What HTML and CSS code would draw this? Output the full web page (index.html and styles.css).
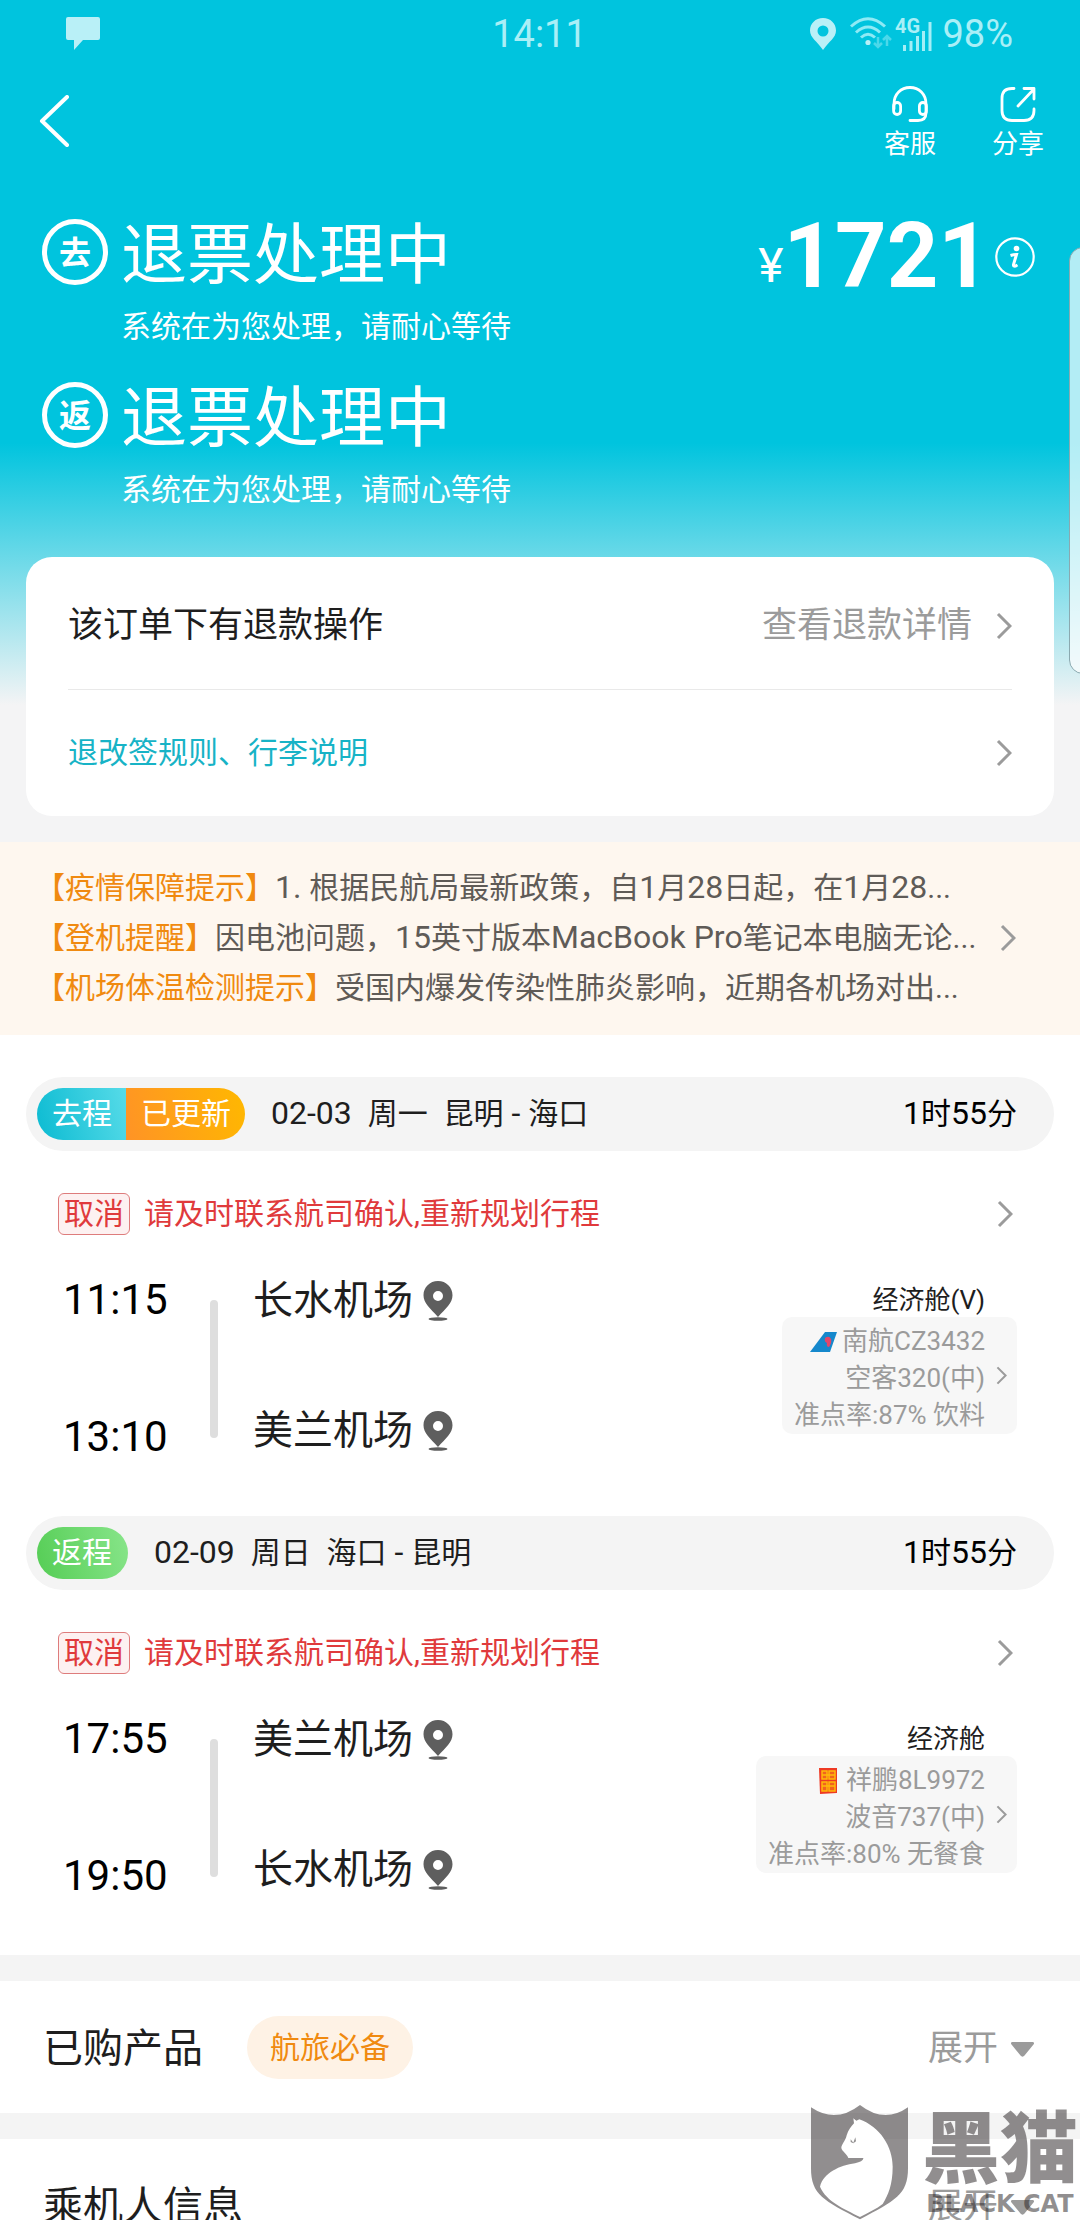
FILE: index.html
```html
<!DOCTYPE html>
<html lang="zh-CN">
<head>
<meta charset="utf-8">
<meta name="viewport" content="width=device-width">
<title>订单详情</title>
<link rel="stylesheet" href="styles.css">
</head>
<body>
<svg class="defs" aria-hidden="true">
  <symbol id="chevron" viewBox="0 0 16 28"><path d="M2 2l12 12L2 26" fill="none" stroke="#9b9b9b" stroke-width="3"/></symbol>
  <symbol id="pin" viewBox="0 0 30 40">
    <path fill="#5e5e5e" fill-rule="evenodd" d="M15 0C6.700 0 .5 6.400.5 14.200.5 22 7 27 15 36 23 27 29.500 22 29.500 14.200 29.500 6.400 23.300 0 15 0zm0 10a5 5 0 1 1 0 10 5 5 0 0 1 0-10z"/>
    <ellipse cx="15" cy="38" rx="9.500" ry="1.800" fill="#5e5e5e"/>
  </symbol>
  <symbol id="caret" viewBox="0 0 23 15"><path fill="#9b9b9b" d="M1.500 0h20c1.500 0 2 1.500 1 2.500l-9 11c-1 1.500-3 1.500-4 0l-9-11C-.5 1.500 0 0 1.500 0z"/></symbol>
</svg>

<div class="hero">
  <div class="statusbar">
    <svg width="34" height="34" viewBox="0 0 34 34"><path fill="#b9f0f7" d="M2 0h30q2 0 2 2v19q0 2-2 2H17L8 33V23H2q-2 0-2-2V2q0-2 2-2z"/></svg>
    <span class="clock">14:11</span>
    <div class="signals">
      <svg width="26" height="32" viewBox="0 0 26 32"><path fill="#b9f0f7" fill-rule="evenodd" d="M13 0C5.500 0 0 5.500 0 12.500 0 20 7 23 13 32 19 23 26 20 26 12.500 26 5.500 20.500 0 13 0zm0 7.500a5.500 5.500 0 1 1 0 11 5.500 5.500 0 0 1 0-11z"/></svg>
      <svg class="wifi" width="42" height="34" viewBox="0 0 42 34">
        <g fill="none" stroke="#8eeaf5" stroke-width="3"><path d="M1 9.500Q18 -6 35 9.500"/><path d="M6 15.500Q18 4.500 30 15.500"/><path d="M11 20.500Q18 14 25 20.500"/></g>
        <circle cx="18" cy="25.500" r="2.600" fill="#b9f0f7"/>
        <path d="M28 20v10m-4-4l4 4 4-4M37 29V19m-4 4l4-4 4 4" fill="none" stroke="#4cd8ea" stroke-width="2.500"/>
      </svg>
      <svg width="38" height="34" viewBox="0 0 38 34">
        <text x="0" y="16" class="net">4G</text>
        <g fill="#a5eef6"><path d="M8 28h3v6H8zM14.500 24h3v10h-3zM21 19h3v15h-3zM27 14h3v20h-3zM33.500 5h3v29h-3z"/></g>
      </svg>
      <span class="battery">98%</span>
    </div>
  </div>

  <header class="appbar">
    <button class="back" aria-label="返回"><svg width="30" height="52" viewBox="0 0 30 52"><path d="M28 2L3 26l25 24" fill="none" stroke="#fff" stroke-width="4" stroke-linecap="round" stroke-linejoin="round"/></svg></button>
    <nav class="tools">
      <button class="tool">
        <svg width="36" height="36" viewBox="0 0 36 36" fill="none" stroke="#fff" stroke-width="2.800" stroke-linecap="round"><path d="M2 23V18C2 8 9 1.500 18 1.500S34 8 34 18v9q0 7.500-8 7.500h-8"/><rect x="1.600" y="16.500" width="7" height="12" rx="3.500"/><rect x="27.400" y="16.500" width="7" height="12" rx="3.500"/></svg>
        客服
      </button>
      <button class="tool">
        <svg width="36" height="36" viewBox="0 0 36 36" fill="none" stroke="#fff" stroke-width="2.800" stroke-linecap="round" stroke-linejoin="round"><path d="M14 2.500h-2q-10 0-10 10v12q0 10 10 10h12q10 0 10-10V23"/><path d="M18 20L34 3M24 2.500h10V13"/></svg>
        分享
      </button>
    </nav>
  </header>

  <section class="summary">
    <div class="states">
      <div class="state"><span class="mark">去</span><h1>退票处理中</h1><p>系统在为您处理，请耐心等待</p></div>
      <div class="state"><span class="mark">返</span><h1>退票处理中</h1><p>系统在为您处理，请耐心等待</p></div>
    </div>
    <div class="price">
      <span class="currency">¥</span><strong>1721</strong>
      <button aria-label="价格说明"><svg width="40" height="40" viewBox="0 0 40 40"><circle cx="20" cy="20" r="18.700" fill="none" stroke="#fff" stroke-width="2.200"/><circle cx="21.500" cy="11.500" r="2.800" fill="#fff"/><path d="M15.500 18.500q3-1 6-1l-3 10q-.5 3 4 .5" fill="none" stroke="#fff" stroke-width="3"/></svg></button>
    </div>
  </section>

  <section class="card">
    <div class="card-row first"><span>该订单下有退款操作</span><a href="#refund">查看退款详情<svg class="chev"><use href="#chevron"/></svg></a></div>
    <a class="card-row rules" href="#rules"><span>退改签规则、行李说明</span><svg class="chev"><use href="#chevron"/></svg></a>
  </section>
</div>

<a class="notice" href="#notice">
  <span class="lines">
    <span><b>【疫情保障提示】</b><span class="latin">1. </span>根据民航局最新政策，自<span class="latin">1</span>月<span class="latin">28</span>日起，在<span class="latin">1</span>月<span class="latin">28</span>...</span>
    <span><b>【登机提醒】</b>因电池问题，<span class="latin">15</span>英寸版本<span class="latin">MacBook Pro</span>笔记本电脑无论...</span>
    <span><b>【机场体温检测提示】</b>受国内爆发传染性肺炎影响，近期各机场对出...</span>
  </span>
  <svg class="chev"><use href="#chevron"/></svg>
</a>

<main class="trips">
  <section class="trip">
    <div class="trip-bar"><span class="badge"><i class="go">去程</i><i class="updated">已更新</i></span><span class="date"><span class="latin">02-03  </span>周一<span class="latin">  </span>昆明<span class="latin"> - </span>海口</span><span class="duration"><span class="latin">1</span>时<span class="latin">55</span>分</span></div>
    <a class="alert" href="#alert-1"><span class="tag">取消</span><span>请及时联系航司确认,重新规划行程</span><svg class="chev"><use href="#chevron"/></svg></a>
    <div class="route">
      <div class="times"><time>11:15</time><time>13:10</time></div>
      <div class="rail"></div>
      <div class="airports"><span>长水机场<svg class="pin"><use href="#pin"/></svg></span><span>美兰机场<svg class="pin"><use href="#pin"/></svg></span></div>
      <div class="flight">
        <span class="cabin">经济舱(V)</span>
        <a class="plane" href="#flight-1">
          <span class="facts">
            <span><svg width="27" height="20" viewBox="0 0 27 20"><path fill="#1588cc" d="M15 0h12l-7 20H0z"/><path fill="#e2466b" d="M15 6q4-3 6 1 1 4-2 8-3 0-2-4-3-1-2-5z"/></svg>南航CZ3432</span>
            <span>空客320(中)</span>
            <span>准点率:87% 饮料</span>
          </span>
          <svg class="mini"><use href="#chevron"/></svg>
        </a>
      </div>
    </div>
  </section>

  <section class="trip">
    <div class="trip-bar"><span class="badge"><i class="return">返程</i></span><span class="date"><span class="latin">02-09  </span>周日<span class="latin">  </span>海口<span class="latin"> - </span>昆明</span><span class="duration"><span class="latin">1</span>时<span class="latin">55</span>分</span></div>
    <a class="alert" href="#alert-2"><span class="tag">取消</span><span>请及时联系航司确认,重新规划行程</span><svg class="chev"><use href="#chevron"/></svg></a>
    <div class="route">
      <div class="times"><time>17:55</time><time>19:50</time></div>
      <div class="rail"></div>
      <div class="airports"><span>美兰机场<svg class="pin"><use href="#pin"/></svg></span><span>长水机场<svg class="pin"><use href="#pin"/></svg></span></div>
      <div class="flight">
        <span class="cabin">经济舱</span>
        <a class="plane" href="#flight-2">
          <span class="facts">
            <span><svg width="22" height="26" viewBox="0 0 22 26"><path fill="#ee3a24" d="M0 0h18v25L1 26z"/><path d="M3 3h5v8H3zM10 3h6v8h-6zM3 14h5v9H3zM10 14h6v9h-6z" fill="#f0641e" stroke="#ffb90a" stroke-width="1.500"/><path d="M3 7h13M3 18h13" stroke="#ffb90a" stroke-width="1.300"/></svg>祥鹏8L9972</span>
            <span>波音737(中)</span>
            <span>准点率:80% 无餐食</span>
          </span>
          <svg class="mini"><use href="#chevron"/></svg>
        </a>
      </div>
    </div>
  </section>
</main>

<section class="fold">
  <h2>已购产品</h2><span class="chip">航旅必备</span>
  <button class="expand">展开<svg class="caret"><use href="#caret"/></svg></button>
</section>
<section class="fold">
  <h2>乘机人信息</h2>
  <button class="expand">展开<svg class="caret"><use href="#caret"/></svg></button>
</section>

<div class="edge-panel"></div>
<div class="watermark">
  <svg width="97" height="115" viewBox="93 75 291 345">
    <path fill="#fff" d="M222 130l-2-15 9 7 9-4C300 140 338 200 338 260c0 60-20 100-38 120l-60 32L120 320c10-40 60-65 105-70 15-4 25-8 25-16h-45c-4-12-19-20-21-30 0-10 12-20 16-38 5-16 13-26 22-36z"/>
    <path class="ink" fill-rule="evenodd" d="M93 82Q167 132 240 75 313 132 384 82V265C384 345 345 362 240 418 132 362 93 345 93 265zM222 130l-2-15 9 7 9-4C300 140 338 200 338 260c0 55-14 85-30 112-18 14-42 26-68 39C190 385 140 365 120 320c10-40 60-65 105-70 15-4 25-8 25-16h-45c-4-12-19-20-21-30 0-10 12-20 16-38 5-16 13-26 22-36z"/>
    <path class="ink" d="M212 178l8 10 6-16 2 12-8 6-8-4z"/>
  </svg>
  <div class="wm-text"><span class="wm-cn">黑猫</span><span class="wm-en">BLACK CAT</span></div>
</div>
</body>
</html>
```
FILE: styles.css
```css
* { box-sizing: border-box; margin: 0; padding: 0; }
html { height: 100%; }
body {
  position: relative;
  height: 100%;
  overflow: hidden;
  background: #fff;
  color: #1e1e1e;
  font-family: Roboto, "Noto Sans CJK SC", sans-serif;
  font-size: 30px;
  line-height: 40px;
  white-space: nowrap;
}
svg { display: block; flex: none; }
a { color: inherit; text-decoration: none; }
button { border: 0; background: none; color: inherit; font: inherit; }
h1, h2, b, i { font-weight: 400; font-style: normal; }
.latin { font-size: 32px; line-height: 32px; }
.defs { position: absolute; width: 0; height: 0; }
.chev { width: 16px; height: 28px; }
.mini { width: 11px; height: 19px; }
.pin { width: 30px; height: 40px; }
.caret { width: 23px; height: 15px; }

.hero {
  padding-bottom: 26px;
  background: linear-gradient(#00c4de 443px, #f4f4f5 705px);
  color: #fff;
}
.statusbar {
  display: grid;
  grid-template-columns: 1fr auto 1fr;
  align-items: center;
  height: 68px;
  padding: 0 67px 0 66px;
  color: #a9eff7;
  font-size: 38px;
}
.signals { display: flex; align-items: center; justify-content: flex-end; gap: 3px; }
.wifi { margin-left: 11px; }
.net { font: 700 20px Roboto, sans-serif; fill: #a9eff7; }
.battery { margin-left: 6px; }

.appbar {
  display: flex;
  justify-content: space-between;
  align-items: flex-start;
  padding: 18px 36px 0 39px;
}
.back { padding: 9px 0; }
.tools { display: flex; gap: 56px; }
.tool {
  display: flex;
  flex-direction: column;
  align-items: center;
  gap: 6px;
  font-size: 26px;
  line-height: 32px;
}

.summary {
  display: flex;
  justify-content: space-between;
  align-items: flex-start;
  padding: 56px 45px 47px 42px;
}
.states { display: grid; gap: 32px; }
.state { display: grid; grid-template-columns: 66px auto; gap: 11px 13px; }
.state h1 { font-size: 66px; line-height: 80px; }
.state p { grid-column: 2; }
.mark {
  width: 66px;
  height: 66px;
  margin-top: 3px;
  border: 5px solid #fff;
  border-radius: 50%;
  font-size: 32px;
  font-weight: 700;
  line-height: 58px;
  text-align: center;
}
.price { display: flex; align-items: center; height: 82px; }
.price strong { font-size: 90px; line-height: 80px; font-weight: 700; }
.currency { align-self: flex-end; font-size: 48px; line-height: 64px; }
.price button { margin-left: 5px; }

.card { margin: 0 26px; padding: 0 42px; border-radius: 26px; background: #fff; }
.card-row { display: flex; justify-content: space-between; align-items: center; height: 126px; }
.card-row.first { height: 133px; padding-top: 5px; border-bottom: 1px solid #e9e9e9; color: #1e1e1e; font-size: 35px; }
.card-row a { display: flex; align-items: center; gap: 24px; color: #9b9b9b; }
.rules { color: #17b3c6; }

.notice {
  display: flex;
  justify-content: space-between;
  align-items: center;
  padding: 21px 64px 22px 35px;
  background: #fef7ef;
  color: #5f5b57;
  line-height: 50px;
}
.lines { display: grid; }
.notice b { color: #f08a10; }

.trips { padding-top: 42px; }
.trip-bar {
  display: flex;
  align-items: center;
  margin: 0 26px;
  padding: 11px 37px 11px 11px;
  border-radius: 37px;
  background: #f4f4f4;
}
.badge { display: flex; overflow: hidden; border-radius: 26px; color: #fff; line-height: 52px; }
.badge i { padding: 0 14px 0 15px; }
.go { background: linear-gradient(75deg, #0cbbd2, #56dbe8); }
.updated { background: linear-gradient(75deg, #ff9326, #ffb800); }
.badge .return { padding: 0 16px 0 15px; background: linear-gradient(75deg, #55cd55, #88e58a); }
.date { margin-left: 26px; white-space: pre; }
.duration { margin-left: auto; color: #000; }
.alert {
  display: flex;
  align-items: center;
  gap: 14px;
  padding: 42px 67px 0 58px;
  color: #e03a3c;
}
.alert .chev { margin-left: auto; }
.tag { padding: 0 5px; border: 1px solid #de7c7c; border-radius: 6px; background: #fdf1f1; }
.route { display: flex; align-items: flex-start; padding: 40px 63px 54px 63px; }
.times { display: grid; gap: 87px; width: 147px; color: #000; font-size: 42px; line-height: 50px; }
.rail { width: 8px; height: 138px; margin: 25px 35px 0 0; border-radius: 4px; background: #dedede; }
.airports { display: grid; gap: 78px; font-size: 40px; line-height: 52px; }
.airports span { display: flex; align-items: center; gap: 10px; }
.flight {
  display: flex;
  flex-direction: column;
  align-items: flex-end;
  margin: 8px 0 0 auto;
  font-size: 26px;
}
.cabin { padding-right: 32px; line-height: 34px; }
.plane {
  display: flex;
  align-items: center;
  gap: 11px;
  padding: 0 10px 0 12px;
  border-radius: 10px;
  background: #f7f7f7;
  color: #9b9b9b;
  line-height: 37px;
}
.facts { display: grid; justify-items: end; padding-top: 6px; }
.facts span { display: flex; align-items: center; gap: 5px; }

.fold {
  display: flex;
  align-items: center;
  height: 158px;
  padding: 0 46px 0 43px;
  border-top: 26px solid #f4f4f4;
}
.fold h2 { padding-top: 4px; font-size: 40px; }
.chip { margin-left: 44px; padding: 0 23px; border-radius: 32px; background: #fef2e5; color: #f08a10; line-height: 63px; }
.expand { display: flex; align-items: center; gap: 13px; margin-left: auto; padding-top: 4px; color: #9b9b9b; font-size: 35px; }

.edge-panel {
  position: absolute;
  top: 247px;
  right: -4px;
  width: 15px;
  height: 427px;
  border: 1px solid #8aa9b0;
  border-radius: 14px 0 0 14px;
  background: rgba(255, 255, 255, 0.7);
}
.watermark { position: absolute; right: 2px; bottom: 0; display: flex; gap: 14px; color: rgba(35, 30, 32, 0.5); }
.ink { fill: rgba(35, 30, 32, 0.5); }
.wm-text { display: grid; align-content: start; justify-items: center; gap: 8px; }
.wm-cn { font-family: "Noto Sans CJK SC", sans-serif; font-size: 78px; font-weight: 900; line-height: 76px; }
.wm-en { font-family: "DejaVu Sans", sans-serif; font-size: 24px; font-weight: 700; line-height: 30px; }
```
